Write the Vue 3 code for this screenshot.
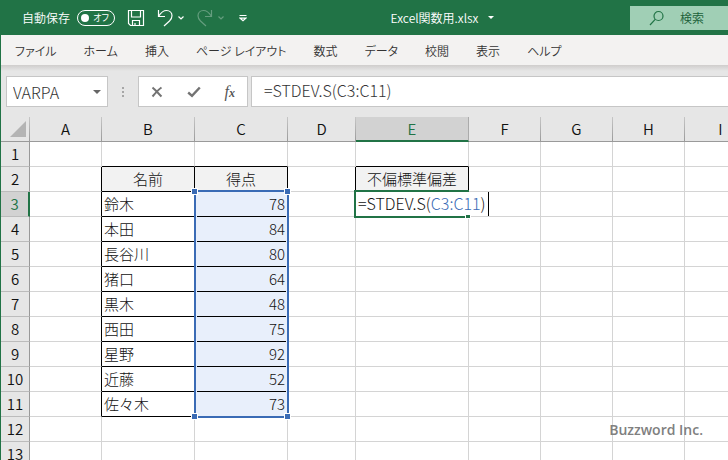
<script setup>
import { ref } from 'vue'

const autosave = ref(false)
const query = ref('')
const nameBox = ref('VARPA')
const formula = ref('=STDEV.S(C3:C11)')

const menus = ['ファイル', 'ホーム', '挿入', 'ページ レイアウト', '数式', 'データ', '校閲', '表示', 'ヘルプ']
const columns = ['A', 'B', 'C', 'D', 'E', 'F', 'G', 'H', 'I']

const values = {
  B2: '名前', C2: '得点', E2: '不偏標準偏差',
  B3: '鈴木', C3: 78,
  B4: '本田', C4: 84,
  B5: '長谷川', C5: 80,
  B6: '猪口', C6: 64,
  B7: '黒木', C7: 48,
  B8: '西田', C8: 75,
  B9: '星野', C9: 92,
  B10: '近藤', C10: 52,
  B11: '佐々木', C11: 73
}

// Cells own their right and bottom edges, so the neighbours above and to the left
// draw the outer edge of a ruled block.
const ruled = (c, r) => ((c === 'B' || c === 'C') && r >= 2 && r <= 11) || (c === 'E' && r === 2)

const cellClass = (c, r) => {
  const next = columns[columns.indexOf(c) + 1]
  return {
    'rule-right': ruled(c, r) || ruled(next, r),
    'rule-bottom': ruled(c, r) || ruled(c, r + 1),
    heading: r === 2 && ruled(c, r),
    number: typeof values[c + r] === 'number',
    picked: c === 'C' && r >= 3 && r <= 11
  }
}
</script>

<template>
  <div class="window">
    <header class="titlebar">
      <div class="quick">
        <label class="autosave">
          <span>自動保存</span>
          <input v-model="autosave" class="sr" type="checkbox" role="switch" />
          <span class="switch"><i></i><b>オフ</b></span>
        </label>
        <button class="tool save" aria-label="上書き保存">
          <svg width="18" height="18" viewBox="0 0 18 18">
            <path d="M1.5 1.5H16.5V16.5H3.5L1.5 14.5ZM4.5 1.5V8H13.5V1.5M5.5 16.5V11.5H12.5V16.5M8 16V14" />
          </svg>
        </button>
        <button class="tool undo" aria-label="元に戻す">
          <svg width="28" height="20" viewBox="0 0 28 20">
            <path d="M1.5 2V8.5H8M1.8 8C4 4.5 6.5 2.5 9.5 2.5C13 2.5 15 5 15 7.8C15 10 14 11.5 12.5 13L7 18" />
            <path class="chev" d="M21.5 8.5L24 11L26.5 8.5" />
          </svg>
        </button>
        <button class="tool redo" aria-label="やり直し" disabled>
          <svg width="28" height="20" viewBox="0 0 28 20">
            <path d="M14.5 2V8.5H8M14.2 8C12 4.5 9.5 2.5 6.5 2.5C3 2.5 1 5 1 7.8C1 10 2 11.5 3.5 13L9 18" />
            <path class="chev" d="M21.5 8.5L24 11L26.5 8.5" />
          </svg>
        </button>
        <button class="tool more" aria-label="クイック アクセス ツール バーのユーザー設定">
          <svg width="8" height="8" viewBox="0 0 8 8">
            <path d="M0.5 1.5H7.5M1.2 4.2L4 6.8L6.8 4.2Z" />
          </svg>
        </button>
      </div>
      <button class="document">
        Excel関数用.xlsx
        <svg width="6" height="3" viewBox="0 0 6 3"><path class="solid" d="M0 0H6L3 3Z" /></svg>
      </button>
      <label class="search">
        <svg width="16" height="16" viewBox="0 0 16 16">
          <circle cx="9.5" cy="6" r="4.5" /><path d="M6.2 9.3L1 15" />
        </svg>
        <input v-model="query" type="text" placeholder="検索" aria-label="検索" />
      </label>
    </header>

    <nav class="ribbon">
      <button v-for="m in menus" :key="m">{{ m }}</button>
    </nav>

    <section class="formulabar">
      <div class="namebox">
        <input v-model="nameBox" type="text" aria-label="名前ボックス" />
        <button aria-label="名前の一覧">
          <svg width="8" height="4" viewBox="0 0 8 4"><path d="M0 0H8L4 4Z" fill="#666" /></svg>
        </button>
      </div>
      <span class="grip"><i></i><i></i><i></i></span>
      <div class="actions">
        <button aria-label="キャンセル">
          <svg width="12" height="12" viewBox="0 0 12 12">
            <path d="M1.5 1.5C4 3.5 8 8 10.5 10.5M10.5 1.5C7.5 3.5 4 7.5 1.5 10.5" fill="none" stroke="#737373" stroke-width="2" />
          </svg>
        </button>
        <button aria-label="入力">
          <svg width="14" height="12" viewBox="0 0 14 12">
            <path d="M1.2 6.5L5 9.8L12.8 1.5" fill="none" stroke="#737373" stroke-width="2.4" />
          </svg>
        </button>
        <button class="fx" aria-label="関数の挿入"><em>f</em><sub>x</sub></button>
      </div>
      <input v-model="formula" class="formula" type="text" aria-label="数式バー" />
    </section>

    <main class="sheet">
      <table>
        <colgroup>
          <col class="w-head" />
          <col v-for="c in columns" :key="c" :class="'w-' + c" />
        </colgroup>
        <thead>
          <tr>
            <th class="corner"><svg width="16" height="16" viewBox="0 0 16 16"><path d="M16 0V16H0Z" fill="#b4b4b4" /></svg></th>
            <th v-for="c in columns" :key="c" scope="col" :class="{ active: c === 'E' }">{{ c }}</th>
          </tr>
        </thead>
        <tbody>
          <tr v-for="r in 13" :key="r">
            <th scope="row" :class="{ active: r === 3 }">{{ r }}</th>
            <td v-for="c in columns" :key="c" :class="cellClass(c, r)">
              {{ values[c + r] }}
              <div v-if="c + r === 'C3'" class="range"><i></i><i></i><i></i><i></i></div>
              <div v-if="c + r === 'E3'" class="editor">
                <span class="entry">=STDEV.S(<span class="ref">C3:C11</span>)</span>
              </div>
            </td>
          </tr>
        </tbody>
      </table>
    </main>
    <div class="credit">Buzzword Inc.</div>
  </div>
</template>

<style>
body {
  margin: 0;
}
</style>

<style scoped>
.window {
  position: relative;
  box-sizing: border-box;
  height: 100vh;
  overflow: hidden;
  border-left: 1px solid #217346;
  background: #fff;
  color: #111;
  font-family: "Noto Sans CJK JP", sans-serif;
  font-size: 15px;
}
button,
input {
  margin: 0;
  padding: 0;
  border: 0;
  background: none;
  color: inherit;
  font: inherit;
  outline: none;
}
svg {
  display: block;
}
.sr {
  position: absolute;
  opacity: 0;
}

/* title bar */
.titlebar {
  display: flex;
  align-items: center;
  height: 35px;
  background: #217346;
  color: #fff;
  font-size: 12px;
  font-weight: 350;
}
.titlebar svg {
  fill: none;
  stroke: #fff;
  stroke-width: 1.2;
}
.titlebar .solid {
  fill: #fff;
  stroke: none;
}
.quick {
  display: flex;
  align-items: center;
  padding-left: 21px;
}
.autosave {
  display: flex;
  align-items: center;
  gap: 7px;
}
.switch {
  display: flex;
  align-items: center;
  justify-content: space-between;
  box-sizing: border-box;
  width: 38px;
  height: 16px;
  padding: 0 5px 0 3px;
  border: 1px solid #fff;
  border-radius: 8px;
}
.switch i {
  width: 8px;
  height: 8px;
  border-radius: 50%;
  background: #fff;
}
.switch b {
  font-size: 9px;
  font-weight: 400;
  line-height: 14px;
  font-feature-settings: "palt";
}
.save {
  margin-left: 12px;
}
.undo {
  margin-left: 12px;
}
.redo {
  margin-left: 12px;
  opacity: 0.3;
}
.more {
  margin-left: 14px;
}
.document {
  display: flex;
  flex: 1;
  align-items: center;
  justify-content: center;
  gap: 10px;
  padding-left: 8px;
}
.search {
  display: flex;
  align-items: center;
  gap: 15px;
  box-sizing: border-box;
  width: 98px;
  height: 24px;
  padding-left: 19px;
  background: #a0cfb5;
  color: #1a5f38;
}
.search svg {
  flex: none;
  stroke: #217346;
}
.search input {
  flex: 1;
  min-width: 0;
}
.search input::placeholder {
  color: #1a5f38;
  opacity: 1;
}

/* ribbon tabs */
.ribbon {
  display: flex;
  gap: 27px;
  height: 30px;
  padding-left: 14px;
  background: #f3f2f1;
  color: #333;
  font-size: 12px;
  font-weight: 350;
  font-feature-settings: "palt";
  white-space: nowrap;
}

/* formula bar */
.formulabar {
  display: flex;
  align-items: center;
  box-sizing: border-box;
  height: 52px;
  padding: 1px 0 0 5px;
  background: linear-gradient(#cfcdcc, #e6e6e6 6px);
  color: #333;
  font-size: 16px;
  font-weight: 300;
}
.namebox,
.actions,
.formula {
  box-sizing: border-box;
  height: 31px;
  border: 1px solid #c6c6c6;
  background: #fff;
}
.namebox {
  display: flex;
  align-items: center;
  width: 102px;
  padding: 0 6px;
}
.namebox input {
  flex: 1;
  min-width: 0;
}
.grip {
  display: grid;
  gap: 2px;
  margin: 0 14px;
}
.grip i {
  width: 2px;
  height: 2px;
  background: #a6a6a6;
}
.actions {
  display: flex;
  align-items: center;
  justify-content: space-between;
  width: 110px;
  padding: 0 12px;
}
.fx {
  color: #555;
  font: italic 400 16px/20px "Liberation Serif", serif;
}
.fx sub {
  font-size: 12px;
  font-weight: 700;
  line-height: 0;
  vertical-align: 0;
}
.formula {
  flex: 1;
  min-width: 0;
  margin-left: 3px;
  padding: 0 0 4px 12px;
  border-right: 0;
}

/* grid */
.sheet {
  overflow: hidden;
}
table {
  width: 0;
  table-layout: fixed;
  border-collapse: separate;
  border-spacing: 0;
}
.w-head { width: 29px; }
.w-A, .w-F, .w-G, .w-H, .w-I { width: 72px; }
.w-B, .w-C { width: 93px; }
.w-D { width: 68px; }
.w-E { width: 113px; }
th,
td {
  box-sizing: border-box;
  height: 25px;
  padding: 0 2px;
  border-right: 1px solid #d4d4d4;
  border-bottom: 1px solid #d4d4d4;
  line-height: 24px;
  white-space: nowrap;
}
th {
  padding: 0;
  background: #e6e6e6;
  font-weight: 350;
  border-color: #bcbcbc;
}
thead th {
  border-right: 1px solid;
  border-image: linear-gradient(#c8c8c8, #999) 1;
  border-left: 0;
  border-top: 0;
  border-bottom: 1px solid #999;
}
thead .active {
  border-image: none;
  border-right-color: #ababab;
  border-bottom: 2px solid #217346;
  background: #d2d2d2;
  color: #217346;
  line-height: 23px;
}
tbody th {
  border-right-color: #999;
}
tbody .active {
  border-right: 2px solid #217346;
  background: #d2d2d2;
  color: #217346;
}
.corner svg {
  margin-left: 9px;
}
td {
  position: relative;
  background: #fff;
  font-weight: 300;
}
.rule-right { border-right-color: #000; }
.rule-bottom { border-bottom-color: #000; }
.heading {
  background: #f2f2f2;
  text-align: center;
}
.number { text-align: right; }
.picked { background: #e8effb; }

/* referenced range: nine rows outlined from the first cell */
.range {
  position: absolute;
  z-index: 1;
  top: -2px;
  right: -2px;
  left: -1px;
  box-sizing: border-box;
  height: 228px;
  border: 2px solid #3a6bb5;
  box-shadow: inset 0 0 0 1px #e8effb;
  pointer-events: none;
}
.range i {
  position: absolute;
  width: 5px;
  height: 5px;
  border: 1px solid #fff;
  background: #3a6bb5;
}
.range i:nth-child(odd) { left: -5px; }
.range i:nth-child(even) { right: -4px; }
.range i:nth-child(-n + 2) { top: -4px; }
.range i:nth-child(n + 3) { bottom: -4px; }

/* in-cell editor */
.editor {
  position: absolute;
  z-index: 2;
  top: -2px;
  right: -1px;
  left: -2px;
  box-sizing: border-box;
  height: 28px;
  border: 2px solid #217346;
  border-right: 0;
  font-size: 16px;
}
.editor::after {
  position: absolute;
  right: -2px;
  bottom: -3px;
  width: 4px;
  height: 3px;
  border: 1px solid #fff;
  background: #217346;
  content: "";
}
.entry {
  position: absolute;
  top: 0;
  left: 0;
  height: 24px;
  padding: 0 2px;
  border-right: 1px solid #000;
  background: #fff;
  line-height: 22px;
}
.ref { color: #3a6bb5; }

.credit {
  position: absolute;
  right: 25px;
  bottom: 20px;
  color: #808080;
  font: 600 14px/20px "Open Sans", sans-serif;
}
</style>
